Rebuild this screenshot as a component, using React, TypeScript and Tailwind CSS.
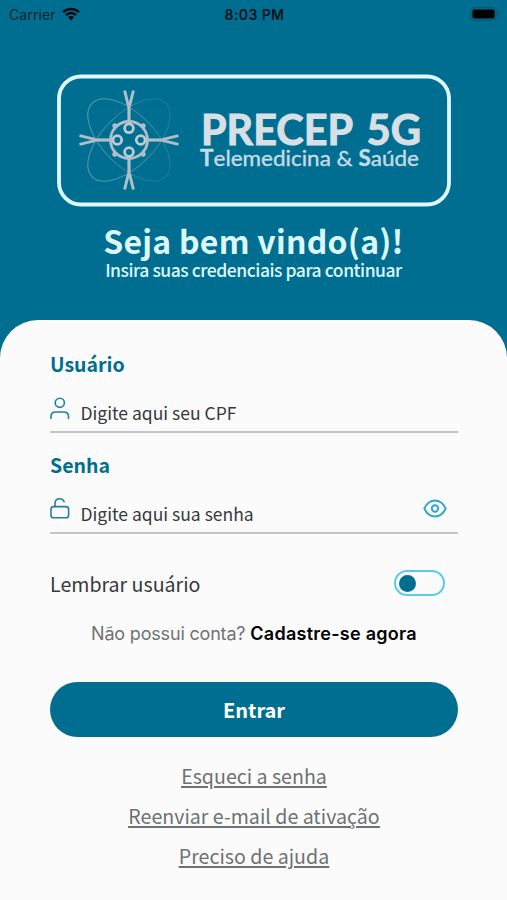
import { useState } from "react";
import type { ReactNode } from "react";

const StatusBar = () => (
    <div className="flex h-7 items-center justify-between pl-[9px] pr-[7px] font-['Inter',sans-serif] text-[14px] text-[#04222d]">
        <div className="flex w-24 items-center gap-[6px]">
            <span className="tracking-[0.1px]">Carrier</span>
            <svg width="18" height="14" viewBox="0 0 18 14" fill="none" stroke="#00090d" strokeWidth="2.5">
                <path d="M1 5.2C5.4 0.8 12.6 0.8 17 5.2" />
                <path d="M3.9 8.2C6.8 5.3 11.2 5.3 14.1 8.2" />
                <path d="M9 13.4L6 10.3C7.7 8.7 10.3 8.7 12 10.3Z" fill="#00090d" stroke="none" />
            </svg>
        </div>
        <span className="font-semibold tracking-[0.4px] text-[#00141c]">8:03 PM</span>
        <div className="flex w-24 justify-end">
            <svg width="30" height="14" viewBox="0 0 30 14">
                <rect x="0.7" y="0.7" width="25.6" height="12.6" rx="4" fill="none" stroke="#03566f" strokeWidth="1.2" />
                <rect x="2.4" y="2.4" width="22.2" height="9.2" rx="2" fill="#000" />
                <path d="M28 4.8c1.6.6 1.6 3.8 0 4.4z" fill="#03495f" />
            </svg>
        </div>
    </div>
);

const Receptor = ({ angle }: { angle: number }) => (
    <g transform={`rotate(${angle} 79 75)`} fill="none" stroke="#adbfc9">
        <path d="M79 56V39" strokeWidth="3.2" />
        <path d="M78.4 41L74.6 25.5M79.6 41L83.4 25.5" strokeWidth="3" />
    </g>
);

const Logo = () => (
    <svg width="396" height="134" viewBox="0 0 396 134" role="img" aria-label="PRECEP 5G" className="mx-auto">
        <defs>
            <linearGradient id="orbit">
                <stop offset="0" stopColor="#5497b1" />
                <stop offset="1" stopColor="#1f7998" />
            </linearGradient>
        </defs>
        <rect x="3" y="3.5" width="390" height="128" rx="22" fill="none" stroke="#dff8ff" strokeWidth="3.8" />
        <g transform="translate(-6 -8)">
            <g fill="none" stroke="url(#orbit)" strokeWidth="1.1">
                <ellipse cx="79" cy="75" rx="52" ry="26" transform="rotate(45 79 75)" />
                <ellipse cx="79" cy="75" rx="52" ry="26" transform="rotate(-45 79 75)" />
            </g>
            <Receptor angle={0} />
            <Receptor angle={90} />
            <Receptor angle={180} />
            <Receptor angle={270} />
            <circle cx="79" cy="75" r="18.5" fill="none" stroke="#aebfc9" strokeWidth="2.8" />
            <g fill="#aebfc9">
                <circle cx="64.8" cy="60.8" r="2.5" />
                <circle cx="93.2" cy="60.8" r="2.5" />
                <circle cx="64.8" cy="89.2" r="2.5" />
                <circle cx="93.2" cy="89.2" r="2.5" />
            </g>
            <g fill="none" stroke="#bccbd3" strokeWidth="2.8">
                <circle cx="79" cy="63.3" r="4.4" />
                <circle cx="79" cy="87" r="4.4" />
                <circle cx="67.3" cy="75" r="4.4" />
                <circle cx="90.7" cy="75" r="4.4" />
            </g>
        </g>
        <g fontFamily="Lato, sans-serif">
            <g fontSize="42.5" fontWeight="700" fill="#d9e0e5" stroke="#d9e0e5" strokeWidth="1">
                <text x="145" y="71.5" textLength="152" lengthAdjust="spacingAndGlyphs">PRECEP</text>
                <text x="310.5" y="71.5" textLength="54.5" lengthAdjust="spacingAndGlyphs">5G</text>
            </g>
            <text x="144" y="92.5" fontSize="22" fill="#c3dbe4" stroke="#c3dbe4" strokeWidth="0.4" textLength="219" lengthAdjust="spacingAndGlyphs">
                <tspan fontWeight="700">T</tspan>elemedicina &amp; <tspan fontWeight="700">S</tspan>aúde
            </text>
        </g>
    </svg>
);

const UserIcon = () => (
    <svg width="20" height="23" viewBox="0 0 20 23" fill="none" stroke="#2180a0" strokeWidth="1.6" strokeLinecap="round">
        <circle cx="9.8" cy="5.8" r="4.6" />
        <path d="M1 21.5V19.5C1 16.8 2.8 15 5.5 15H13.8C16.5 15 18.5 16.8 18.5 19.5V21.5" />
    </svg>
);

const UnlockIcon = () => (
    <svg width="20" height="23" viewBox="0 0 20 23" fill="none" stroke="#2180a0" strokeWidth="1.6" strokeLinecap="round">
        <rect x="1" y="9.6" width="17.6" height="11.2" rx="2.6" />
        <path d="M5 9.4V6.5C5 3.5 7 1.7 9.6 1.7C11.8 1.7 13.4 2.8 14.1 4.6" />
    </svg>
);

const EyeIcon = () => (
    <svg width="24" height="19" viewBox="0 0 24 19" fill="none" stroke="#2ba6cc" strokeWidth="1.9">
        <path d="M1.3 9.5C3.8 4.2 7.5 1.5 12 1.5S20.2 4.2 22.7 9.5C20.2 14.8 16.5 17.5 12 17.5S3.8 14.8 1.3 9.5Z" strokeLinejoin="round" />
        <circle cx="12" cy="9.5" r="3.2" />
    </svg>
);

type FieldProps = {
    label: string;
    placeholder: string;
    icon: ReactNode;
    type?: string;
    action?: ReactNode;
};

const Field = ({ label, placeholder, icon, type = "text", action }: FieldProps) => (
    <label className="block h-[100.5px]">
        <span className="block h-8 text-[19.5px] font-bold leading-8 text-[#006e8f]">{label}</span>
        <div className="flex h-[53px] items-center border-b-2 border-[#c3c5c6] pt-1">
            <span className="w-[30.5px] pt-[1px]">{icon}</span>
            <input
                type={type}
                placeholder={placeholder}
                className="h-8 min-w-0 flex-1 translate-y-[4.5px] bg-transparent text-[17.5px] outline-none placeholder:text-[#35393b]"
            />
            {action}
        </div>
    </label>
);

const App = () => {
    const [remember, setRemember] = useState(false);
    const [showPassword, setShowPassword] = useState(false);

    return (
        <div className="flex h-[900px] w-full flex-col overflow-hidden bg-[#006e90] font-['Noto_Sans_CJK_JP',sans-serif]">
            <StatusBar />
            <header className="flex h-[292px] shrink-0 flex-col items-center pt-[45px] text-[#dcf8ff]">
                <Logo />
                <h1 className="mt-[13px] h-[38px] whitespace-nowrap text-[32px] font-bold leading-10 tracking-[0.24px]">Seja bem vindo(a)!</h1>
                <p className="h-6 whitespace-nowrap text-[17.5px] font-medium leading-6 tracking-[-0.46px]">Insira suas credenciais para continuar</p>
            </header>
            <main className="flex flex-1 flex-col rounded-t-[38px] bg-[#fbfbfb] pl-[50px] pr-[49px] pt-7">
                <Field label="Usuário" placeholder="Digite aqui seu CPF" icon={<UserIcon />} />
                <Field
                    label="Senha"
                    placeholder="Digite aqui sua senha"
                    type={showPassword ? "text" : "password"}
                    icon={<UnlockIcon />}
                    action={
                        <button type="button" aria-label="Mostrar senha" className="mr-[11px]" onClick={() => setShowPassword(!showPassword)}>
                            <EyeIcon />
                        </button>
                    }
                />
                <div className="mt-[18px] flex h-8 items-center justify-between pr-[13px]">
                    <span className="pt-0.5 text-[19.6px] leading-8 text-[#35393b]">Lembrar usuário</span>
                    <button
                        type="button"
                        role="switch"
                        aria-checked={remember}
                        aria-label="Lembrar usuário"
                        onClick={() => setRemember(!remember)}
                        className={`flex h-[26px] w-[51px] items-center rounded-full border-2 border-[#59cbea] px-[3px] ${remember ? "justify-end" : "justify-start"}`}
                    >
                        <span className="size-[17px] rounded-full bg-[#006e90]" />
                    </button>
                </div>
                <p className="mt-[23px] h-6 whitespace-nowrap text-center font-['Inter',sans-serif] text-[18px] leading-6 text-[#707273]">
                    <span className="tracking-[-0.18px]">Não possui conta? </span>
                    <a className="font-semibold tracking-[0.27px] text-black">Cadastre-se agora</a>
                </p>
                <button type="button" className="mt-9 h-[55px] shrink-0 rounded-full bg-[#006e90] text-[20px] font-bold text-white">
                    Entrar
                </button>
                <nav className="mt-[19px] flex flex-col items-center text-[19.6px] leading-10 text-[#6d7172] underline decoration-[1.5px] underline-offset-[2px]">
                    <a>Esqueci a senha</a>
                    <a>Reenviar e-mail de ativação</a>
                    <a>Preciso de ajuda</a>
                </nav>
            </main>
        </div>
    );
};

export default App;
